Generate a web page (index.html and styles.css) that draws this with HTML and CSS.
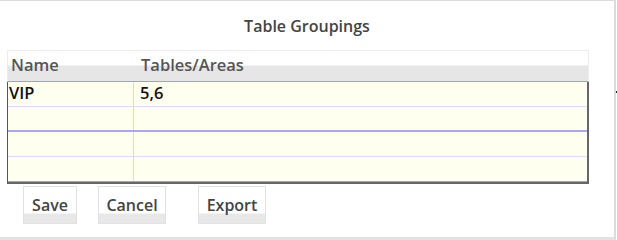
FILE: index.html
```html
<!DOCTYPE html>
<html>
<head>
<meta charset="utf-8">
<link rel="stylesheet" href="styles.css">
</head>
<body>
<div class="frame">
  <div class="title">Table Groupings</div>
  <div class="grid">
    <div class="head">
      <div class="c1">Name</div>
      <div class="c2">Tables/Areas</div>
    </div>
    <div class="body">
      <div class="row light"><div class="c1">VIP</div><div class="c2">5,6</div></div>
      <div class="row blue"><div class="c1"></div><div class="c2"></div></div>
      <div class="row light"><div class="c1"></div><div class="c2"></div></div>
      <div class="row blue"><div class="c1"></div><div class="c2"></div></div>
    </div>
  </div>
  <div class="buttons">
    <div class="btn save">Save</div>
    <div class="btn cancel">Cancel</div>
    <div class="btn export">Export</div>
  </div>
  <span class="mark"></span>
</div>
</body>
</html>
```
FILE: styles.css
```css
html, body {
  margin: 0;
  padding: 0;
  background: #fff;
}
body {
  font-family: "Open Sans", "DejaVu Sans", sans-serif;
  font-weight: 600;
}
.frame {
  position: relative;
  width: 614px;
  height: 236px;
  border-top: 1px solid #dcdcdc;
  border-right: 2px solid #dcdcdc;
  border-bottom: 3px solid #e2e2e2;
}
.title {
  height: 49px;
  box-sizing: border-box;
  padding-top: 14px;
  text-align: center;
  font-size: 16px;
  line-height: 22px;
  color: #444;
}
.grid {
  margin-left: 7px;
  width: 582px;
}
.head {
  display: flex;
  height: 32px;
  box-sizing: border-box;
  border: 1px solid #ececec;
  border-bottom: 1px solid #9c9cee;
  background: linear-gradient(#fff 0, #fff 14px, #e6e6e6 15px, #e6e6e6 100%);
  color: #555;
  font-size: 16.5px;
  line-height: 22px;
  padding-top: 3px;
}
.head .c1 {
  width: 129px;
  padding-left: 3px;
  box-sizing: border-box;
}
.head .c2 {
  padding-left: 4px;
}
.body {
  border-left: 1px solid #555;
  border-right: 2px solid #666;
  border-bottom: 2px solid #666;
  background: #fffff0;
}
.row {
  display: flex;
  height: 25px;
  box-sizing: border-box;
  font-size: 16.5px;
  line-height: 22px;
  color: #111;
}
.row.light { border-bottom: 1px solid #dcdcf4; }
.row.blue { border-bottom: 2px solid #a8a8f0; }
.row:last-child { border-bottom: 1px solid #a0a0ee; }
.row .c1 {
  width: 126px;
  box-sizing: border-box;
  padding-left: 1px;
  border-right: 1px solid #d8d8f6;
}
.row .c2 {
  padding-left: 6px;
}
.buttons {
  display: flex;
  padding-left: 23px;
  margin-top: 2px;
}
.btn {
  height: 38px;
  box-sizing: border-box;
  border: 1px solid #e2e2e2;
  background: linear-gradient(#fff 0, #fff 26px, #e8e8e8 27px, #e8e8e8 100%);
  color: #444;
  font-size: 16px;
  line-height: 36px;
  text-align: center;
}
.save { width: 54px; margin-right: 21px; }
.cancel { width: 68px; margin-right: 32px; }
.export { width: 68px; }
.mark {
  position: absolute;
  right: -4px;
  top: 90px;
  width: 2px;
  height: 2px;
  background: #222;
}
```
